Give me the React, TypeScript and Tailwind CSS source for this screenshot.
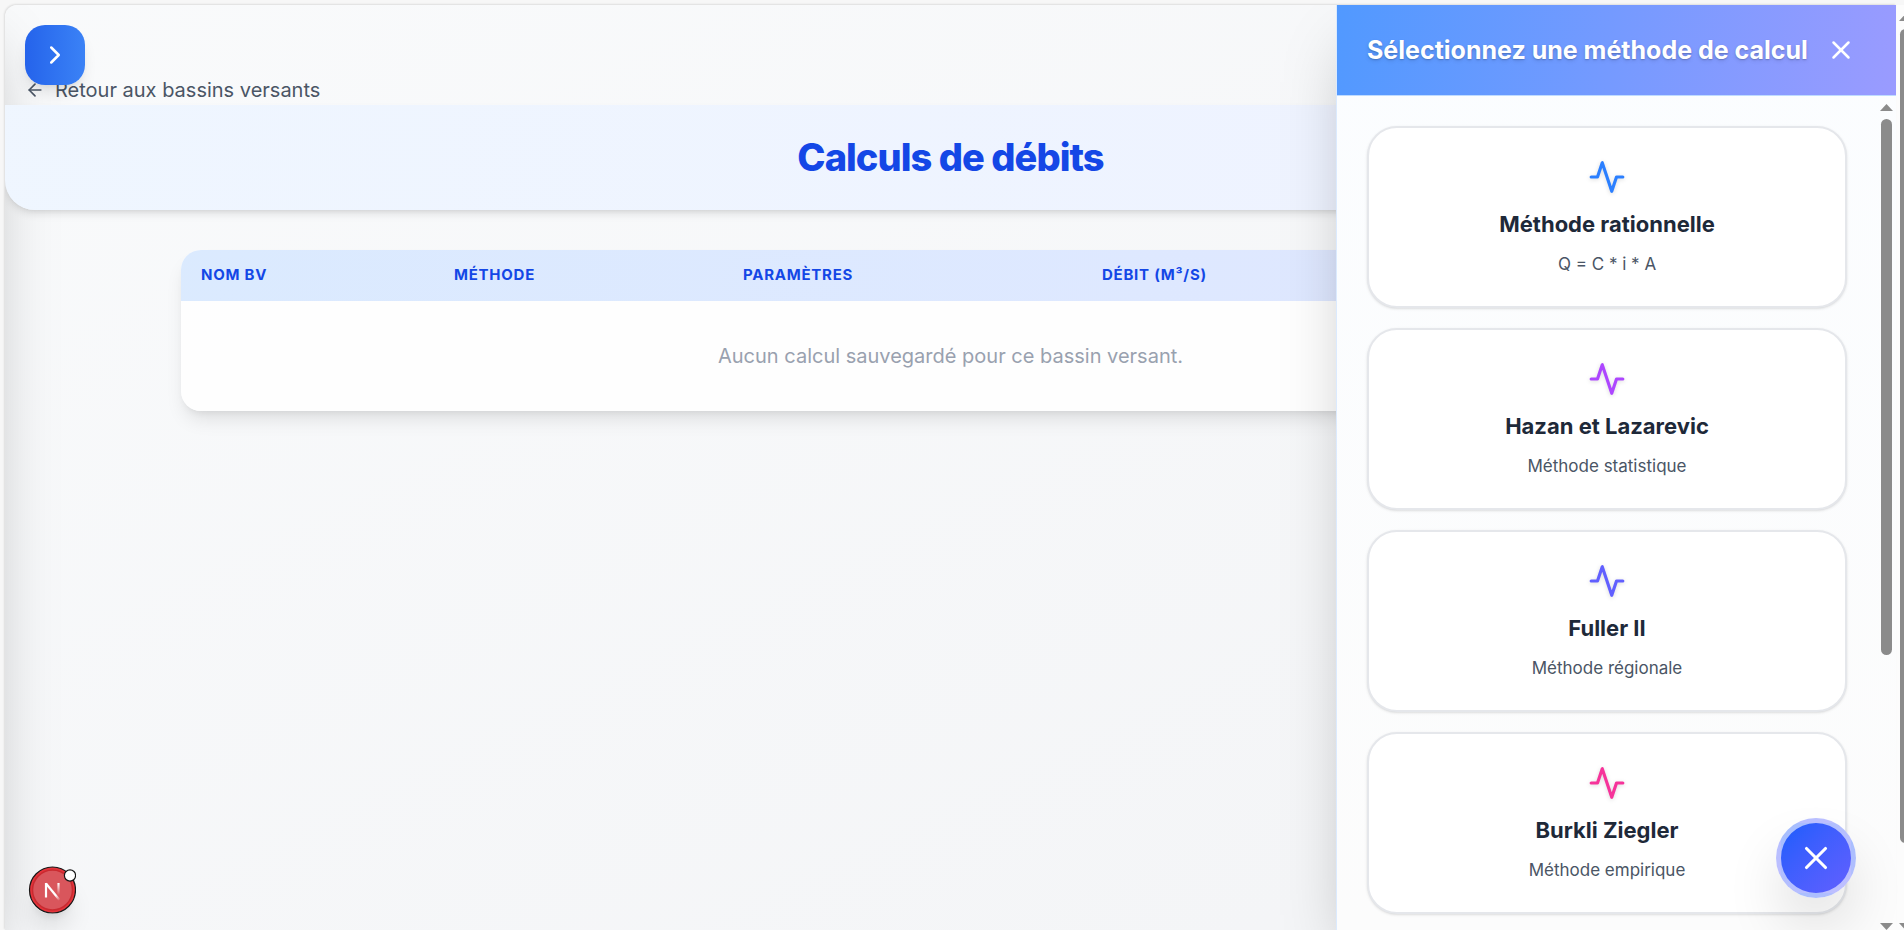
import { useState } from 'react';
import { ArrowLeft, ChevronRight, X } from 'lucide-react';
import { FiActivity } from 'react-icons/fi';

const methodes = [
  { id: 'rationnelle', nom: 'Méthode rationnelle', detail: 'Q = C * i * A', couleur: 'text-blue-500' },
  { id: 'hazan', nom: 'Hazan et Lazarevic', detail: 'Méthode statistique', couleur: 'text-purple-500' },
  { id: 'fuller', nom: 'Fuller II', detail: 'Méthode régionale', couleur: 'text-indigo-500' },
  { id: 'burkli', nom: 'Burkli Ziegler', detail: 'Méthode empirique', couleur: 'text-pink-500' },
];

function ScrollBar({ thumb }: { thumb: string }) {
  return (
    <div className="flex h-full w-[19px] shrink-0 flex-col items-center justify-between" aria-hidden="true">
      <svg width="13" height="7" viewBox="0 0 13 7" className="shrink-0 fill-[#8b8b8b]">
        <path d="M6.5 0L13 7H0z" />
      </svg>
      <div className="mt-2 min-h-0 w-full flex-1">
        <div className={`mx-auto w-[11px] rounded-full bg-[#8b8b8b] ${thumb}`} />
      </div>
      <svg width="13" height="7" viewBox="0 0 13 7" className="shrink-0 fill-[#8b8b8b]">
        <path d="M0 0h13L6.5 7z" />
      </svg>
    </div>
  );
}

function DevBadge() {
  return (
    <button type="button" aria-label="Open Next.js Dev Tools" className="fixed bottom-4 left-7 z-30 size-12 rounded-full shadow-xl">
      <svg width="48" height="48" viewBox="0 0 48 48" fill="none">
        <defs>
          <linearGradient id="n-diag" x1="24" y1="24" x2="32" y2="34" gradientUnits="userSpaceOnUse">
            <stop offset="0.5" stopColor="#fff" />
            <stop offset="1" stopColor="#fff" stopOpacity="0" />
          </linearGradient>
          <linearGradient id="n-bar" x1="30" y1="17" x2="30" y2="29" gradientUnits="userSpaceOnUse">
            <stop stopColor="#fff" />
            <stop offset="1" stopColor="#fff" stopOpacity="0" />
          </linearGradient>
        </defs>
        <circle cx="24.5" cy="24" r="23" fill="#e5343b" stroke="#171717" strokeWidth="1.2" />
        <circle cx="24.5" cy="24" r="20" fill="#d9565c" stroke="#ca2a30" strokeWidth="1.5" />
        <path d="M18 17.5L31.5 34" stroke="url(#n-diag)" strokeWidth="2.2" />
        <path d="M18 31.5V17" stroke="#fff" strokeWidth="2.2" />
        <path d="M30.5 17v12" stroke="url(#n-bar)" strokeWidth="2.2" />
        <circle cx="42" cy="9.5" r="5.6" fill="#fff" stroke="#171717" strokeWidth="1.2" />
      </svg>
    </button>
  );
}

export default function App() {
  const [panelOpen, setPanelOpen] = useState(true);

  return (
    <div className="flex h-screen overflow-hidden bg-[#f7f7f7] pt-[5px] pl-[5px] font-[Inter,sans-serif]">
      <main className="relative min-w-0 flex-1 overflow-hidden rounded-tl-xl bg-linear-to-br from-gray-50 to-gray-100 shadow-[-1px_-1px_2px_rgba(0,0,0,0.1)]">
        {/* Menu latéral replié */}
        <aside className="absolute inset-y-0 right-full w-80 shadow-[0_31px_62px_-15px_rgba(0,0,0,0.25)]" />
        <button
          type="button"
          aria-label="Ouvrir le menu"
          className="absolute top-5 left-5 z-20 flex size-[60px] items-center justify-center rounded-[20px] bg-linear-to-r from-[#2563eb] to-[#3b82f6] text-white shadow-lg"
        >
          <ChevronRight className="size-[30px]" />
        </button>

        <div className="relative px-5 pt-[70px]">
          <a href="#bassins" className="inline-flex h-[30px] items-center gap-[10px] align-top text-xl text-gray-600">
            <ArrowLeft className="size-5" />
            Retour aux bassins versants
          </a>
        </div>

        <header className="relative flex h-[105px] items-center justify-center rounded-b-[30px] bg-linear-to-r from-blue-50 to-indigo-50 shadow-[0_5px_8px_-1px_rgba(0,0,0,0.1),0_3px_5px_-3px_rgba(0,0,0,0.1)]">
          <h1 className="text-[38px] font-extrabold tracking-tight text-blue-700">Calculs de débits</h1>
        </header>

        <section className="relative mx-auto mt-10 w-[calc(100%-352px)] overflow-hidden rounded-[20px] bg-white/90 shadow-[0_12px_19px_-4px_rgba(0,0,0,0.1),0_5px_8px_-5px_rgba(0,0,0,0.1)]">
          <table className="w-full table-fixed text-left">
            <thead className="bg-linear-to-r from-blue-100 to-indigo-100">
              <tr className="h-[51px] text-[15px] tracking-wider text-blue-700 uppercase">
                <th className="w-[253px] px-5 font-bold">Nom BV</th>
                <th className="w-[289px] px-5 font-bold">Méthode</th>
                <th className="w-[359px] px-5 font-bold">Paramètres</th>
                <th className="w-[280px] px-5 font-bold">Débit (m³/s)</th>
                <th className="px-5 font-bold">Actions</th>
              </tr>
            </thead>
            <tbody>
              <tr>
                <td colSpan={5} className="h-[110px] text-center text-xl text-gray-400">
                  Aucun calcul sauvegardé pour ce bassin versant.
                </td>
              </tr>
            </tbody>
          </table>
        </section>

        {panelOpen && (
          <aside className="absolute inset-y-0 right-0 z-20 flex w-[560px] flex-col border-l border-blue-100 bg-linear-to-b from-[#fbfdff] to-[#fcfcfc] shadow-[0_31px_62px_-15px_rgba(0,0,0,0.25)]">
            <div className="flex h-[91px] shrink-0 items-center justify-between border-b border-blue-200 bg-linear-[100deg] from-[#5199ff] to-[#9a9bff] px-[30px] text-white">
              <h2 className="text-[25px] leading-9 font-bold text-shadow-md">Sélectionnez une méthode de calcul</h2>
              <button type="button" aria-label="Fermer" onClick={() => setPanelOpen(false)} className="p-[10px]">
                <X className="size-[30px]" />
              </button>
            </div>
            <div className="flex min-h-0 flex-1">
              <div className="flex min-w-0 flex-1 flex-col gap-5 overflow-hidden px-[30px] pt-[30px]">
                {methodes.map((m) => (
                  <button
                    key={m.id}
                    type="button"
                    className="flex shrink-0 flex-col items-center rounded-[30px] border-2 border-gray-200 bg-white py-[30px] shadow-sm"
                  >
                    <FiActivity className={`size-[38px] drop-shadow-sm ${m.couleur}`} />
                    <span className="mt-[14px] text-[22px] leading-7 font-bold text-gray-800">{m.nom}</span>
                    <span className="mt-[14px] text-[17px] leading-6 text-gray-600">{m.detail}</span>
                  </button>
                ))}
              </div>
              <div className="pt-2">
                <ScrollBar thumb="h-2/3" />
              </div>
            </div>
          </aside>
        )}
      </main>

      <div className="w-2 overflow-hidden bg-[#fcfcfc] pt-[9px]">
        <ScrollBar thumb="h-[91%]" />
      </div>

      <button
        type="button"
        aria-label="Basculer le panneau"
        onClick={() => setPanelOpen(!panelOpen)}
        className="fixed right-12 bottom-8 z-30 flex size-20 items-center justify-center rounded-full border-5 border-white/60 bg-linear-to-br from-[#155dfc] to-[#615fff] text-white shadow-[0_31px_62px_-10px_rgba(0,0,0,0.2)]"
      >
        <X className="size-[38px]" />
      </button>

      <DevBadge />
    </div>
  );
}
